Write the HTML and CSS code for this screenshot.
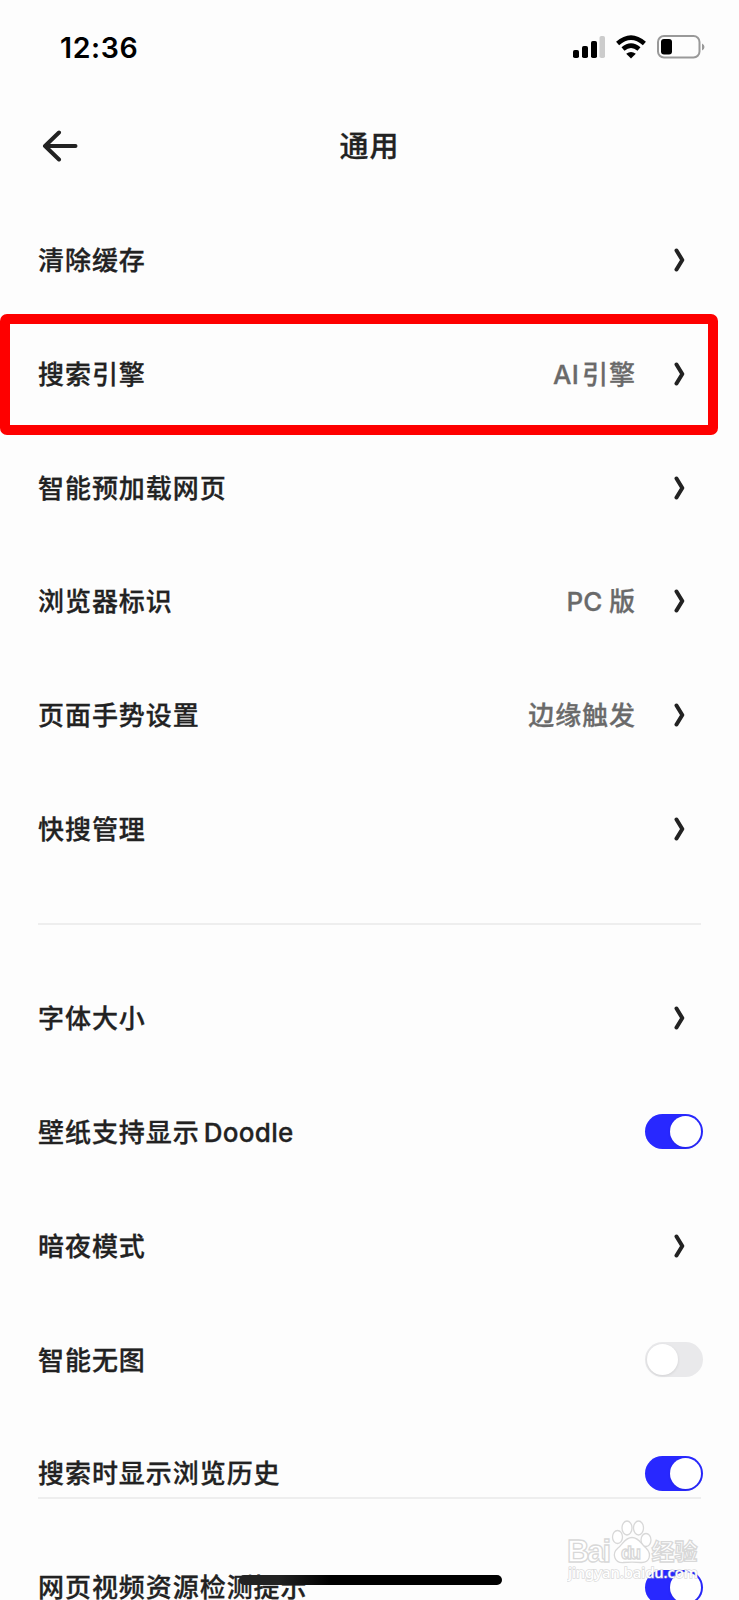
FILE: index.html
```
<!DOCTYPE html>
<html lang="zh-CN">
<head>
    <meta charset="UTF-8">
    <meta name="viewport" content="width=device-width, initial-scale=1.0">
    <title>通用</title>
    <link rel="stylesheet" href="styles.css">
</head>

<body>
    <svg class="symbols" width="0" height="0">
        <symbol id="chevron" viewBox="0 0 12 24">
            <path d="M2.5 2.5L8.3 12L2.5 21.5" fill="none" stroke="#222" stroke-width="4" stroke-linecap="round" stroke-linejoin="round"/>
        </symbol>
    </svg>

    <div class="screen">
        <div class="status-bar">
            <span class="time">12:36</span>
            <div class="status-icons">
                <svg width="32" height="22" viewBox="0 0 32 22">
                    <rect x="0" y="14" width="6" height="8" rx="1.8"/>
                    <rect x="9" y="10" width="6" height="12" rx="1.8"/>
                    <rect x="18" y="5" width="6" height="17" rx="1.8"/>
                    <rect x="26.5" y="0" width="5.5" height="22" rx="1.8" fill="#ccc"/>
                </svg>
                <svg class="wifi" width="32" height="24" viewBox="0 0 32 24">
                    <path d="M2.6 8.6Q16 -3.2 29.4 8.6M8 14Q16 7.2 24 14" fill="none" stroke="#000" stroke-width="4.6"/>
                    <path d="M16 23.5L11.2 18.8Q16 15 20.8 18.8Z"/>
                </svg>
                <svg class="battery" width="48" height="24" viewBox="0 0 48 24">
                    <rect x="1" y="1" width="41.5" height="21.5" rx="6" fill="none" stroke="#999" stroke-width="2"/>
                    <rect x="4" y="4" width="11" height="15.5" rx="3"/>
                    <path d="M45 8.5Q47.5 9.5 47.5 12T45 15.5Z" fill="#999"/>
                </svg>
            </div>
        </div>

        <div class="nav-bar">
            <svg class="back" width="36" height="32" viewBox="0 0 36 32">
                <path d="M17 2.5L3 16L17 29.5M3 16H33.5" fill="none" stroke="#222" stroke-width="4" stroke-linecap="round" stroke-linejoin="round"/>
            </svg>
            <h1>通用</h1>
        </div>

        <div class="group">
            <div class="row">
                <span class="label">清除缓存</span>
                <svg class="chevron"><use href="#chevron"/></svg>
            </div>
            <div class="row highlighted">
                <span class="label">搜索引擎</span>
                <span class="value"><span class="latin">AI</span>引擎</span>
                <svg class="chevron"><use href="#chevron"/></svg>
            </div>
            <div class="row">
                <span class="label">智能预加载网页</span>
                <svg class="chevron"><use href="#chevron"/></svg>
            </div>
            <div class="row">
                <span class="label">浏览器标识</span>
                <span class="value"><span class="latin spaced">PC</span> 版</span>
                <svg class="chevron"><use href="#chevron"/></svg>
            </div>
            <div class="row">
                <span class="label">页面手势设置</span>
                <span class="value">边缘触发</span>
                <svg class="chevron"><use href="#chevron"/></svg>
            </div>
            <div class="row">
                <span class="label">快搜管理</span>
                <svg class="chevron"><use href="#chevron"/></svg>
            </div>
        </div>

        <div class="divider"></div>

        <div class="group">
            <div class="row">
                <span class="label">字体大小</span>
                <svg class="chevron"><use href="#chevron"/></svg>
            </div>
            <div class="row">
                <span class="label">壁纸支持显示<span class="latin">Doodle</span></span>
                <div class="switch on"></div>
            </div>
            <div class="row">
                <span class="label">暗夜模式</span>
                <svg class="chevron"><use href="#chevron"/></svg>
            </div>
            <div class="row">
                <span class="label">智能无图</span>
                <div class="switch"></div>
            </div>
            <div class="row underlined">
                <span class="label">搜索时显示浏览历史</span>
                <div class="switch on"></div>
            </div>
            <div class="row">
                <span class="label">网页视频资源检测提示</span>
                <div class="switch on"></div>
            </div>
        </div>

        <div class="home-indicator"></div>

        <svg class="watermark" width="140" height="70" viewBox="0 0 140 70">
            <g fill="#fff" stroke="#d8d8d8" stroke-width="1.3">
                <text x="0" y="41.5" class="wm-logo" textLength="44">Bai</text>
                <ellipse cx="50.5" cy="17" rx="5" ry="6.5"/>
                <ellipse cx="60" cy="8" rx="5" ry="7"/>
                <ellipse cx="71.5" cy="8" rx="5" ry="7"/>
                <ellipse cx="79" cy="20" rx="5" ry="6.5"/>
                <path d="M65 17.5C58 17.5 56 24 51 28C44 34 48 43 56 42.5C61 42 69 42 74 42.5C83 43 85 34 79 28C74 24 72 17.5 65 17.5Z"/>
                <text x="54" y="39" class="wm-du" textLength="20">du</text>
                <text x="84.5" y="40" class="wm-cjk" textLength="46">经验</text>
            </g>
            <text x="1" y="58" class="wm-url" textLength="130">jingyan.baidu.com</text>
        </svg>
    </div>
</body>

</html>
```

FILE: styles.css
```
body {
    margin: 0;
    background-color: #fdfdfd;
    font-family: 'Noto Sans CJK SC', sans-serif;
    color: #222;
}

.symbols {
    position: absolute;
}

.screen {
    position: relative;
    height: 1600px;
    overflow: hidden;
}

.status-bar {
    display: flex;
    justify-content: space-between;
    align-items: center;
    height: 94px;
    padding: 0 34px 0 60px;
    box-sizing: border-box;
}

.time {
    font-family: Inter, sans-serif;
    font-size: 28.5px;
    font-weight: 600;
    letter-spacing: 0.6px;
    color: #000;
}

.status-icons {
    display: flex;
    align-items: center;
}

.wifi {
    margin-left: 10px;
}

.battery {
    margin-left: 10px;
}

.nav-bar {
    display: flex;
    justify-content: center;
    align-items: center;
    height: 109px;
    padding-bottom: 10px;
    box-sizing: border-box;
    position: relative;
}

.back {
    position: absolute;
    left: 42px;
    top: 36px;
}

h1 {
    margin: 0;
    font-size: 29px;
    font-weight: 500;
    letter-spacing: 1px;
    -webkit-text-stroke: 0.3px;
}

.row {
    display: flex;
    align-items: center;
    height: 113.85px;
    padding: 0 36px 0 38px;
    position: relative;
}

.label,
.value {
    font-size: 26px;
    font-weight: 500;
    line-height: 38px;
    letter-spacing: 0.95px;
    white-space: nowrap;
    padding-bottom: 2px;
    -webkit-text-stroke: 0.3px;
}

.label {
    flex: 1;
}

.value {
    color: #6a6a6a;
    margin-right: 38px;
}

.latin {
    font-family: Inter, sans-serif;
    line-height: 0;
    letter-spacing: 0.3px;
    margin: 0 3px 0 4px;
}

.latin.spaced {
    letter-spacing: 0;
    margin: 0;
}

.chevron {
    width: 12px;
    height: 24px;
    margin-right: 17px;
}

.highlighted::after {
    content: "";
    position: absolute;
    left: 0;
    top: -3px;
    width: 718px;
    height: 121px;
    box-sizing: border-box;
    border: 10px solid #fe0000;
    border-radius: 7px;
}

.divider {
    height: 2px;
    margin: 37px 38px 36px;
    background-color: #eee;
}

.underlined::after {
    content: "";
    position: absolute;
    left: 38px;
    right: 38px;
    bottom: 31px;
    height: 2px;
    background-color: #eee;
}

.switch {
    position: relative;
    width: 58px;
    height: 35px;
    border-radius: 18px;
    background-color: #e9e9eb;
}

.switch::after {
    content: "";
    position: absolute;
    left: 2px;
    top: 2px;
    width: 31px;
    height: 31px;
    border-radius: 50%;
    background-color: #fff;
    box-shadow: 0 1px 3px rgba(0, 0, 0, 0.1);
}

.switch.on {
    background-color: #2828ff;
}

.switch.on::after {
    left: 25px;
}

.home-indicator {
    position: absolute;
    left: 239px;
    top: 1575px;
    width: 263px;
    height: 10px;
    border-radius: 5px;
    background: linear-gradient(to right, #222 15%, #000 35%);
}

.watermark {
    position: absolute;
    left: 567px;
    top: 1520px;
}

.wm-logo {
    font: bold 31px 'Liberation Sans', sans-serif;
}

.wm-du {
    font: bold 18px 'Liberation Sans', sans-serif;
}

.wm-cjk {
    font: bold 23px 'Noto Sans CJK SC', sans-serif;
}

.wm-url {
    font: 500 15px 'Noto Sans', sans-serif;
    fill: #fff;
    stroke: rgba(190, 190, 190, 0.55);
    stroke-width: 1.5px;
    paint-order: stroke;
}
```
